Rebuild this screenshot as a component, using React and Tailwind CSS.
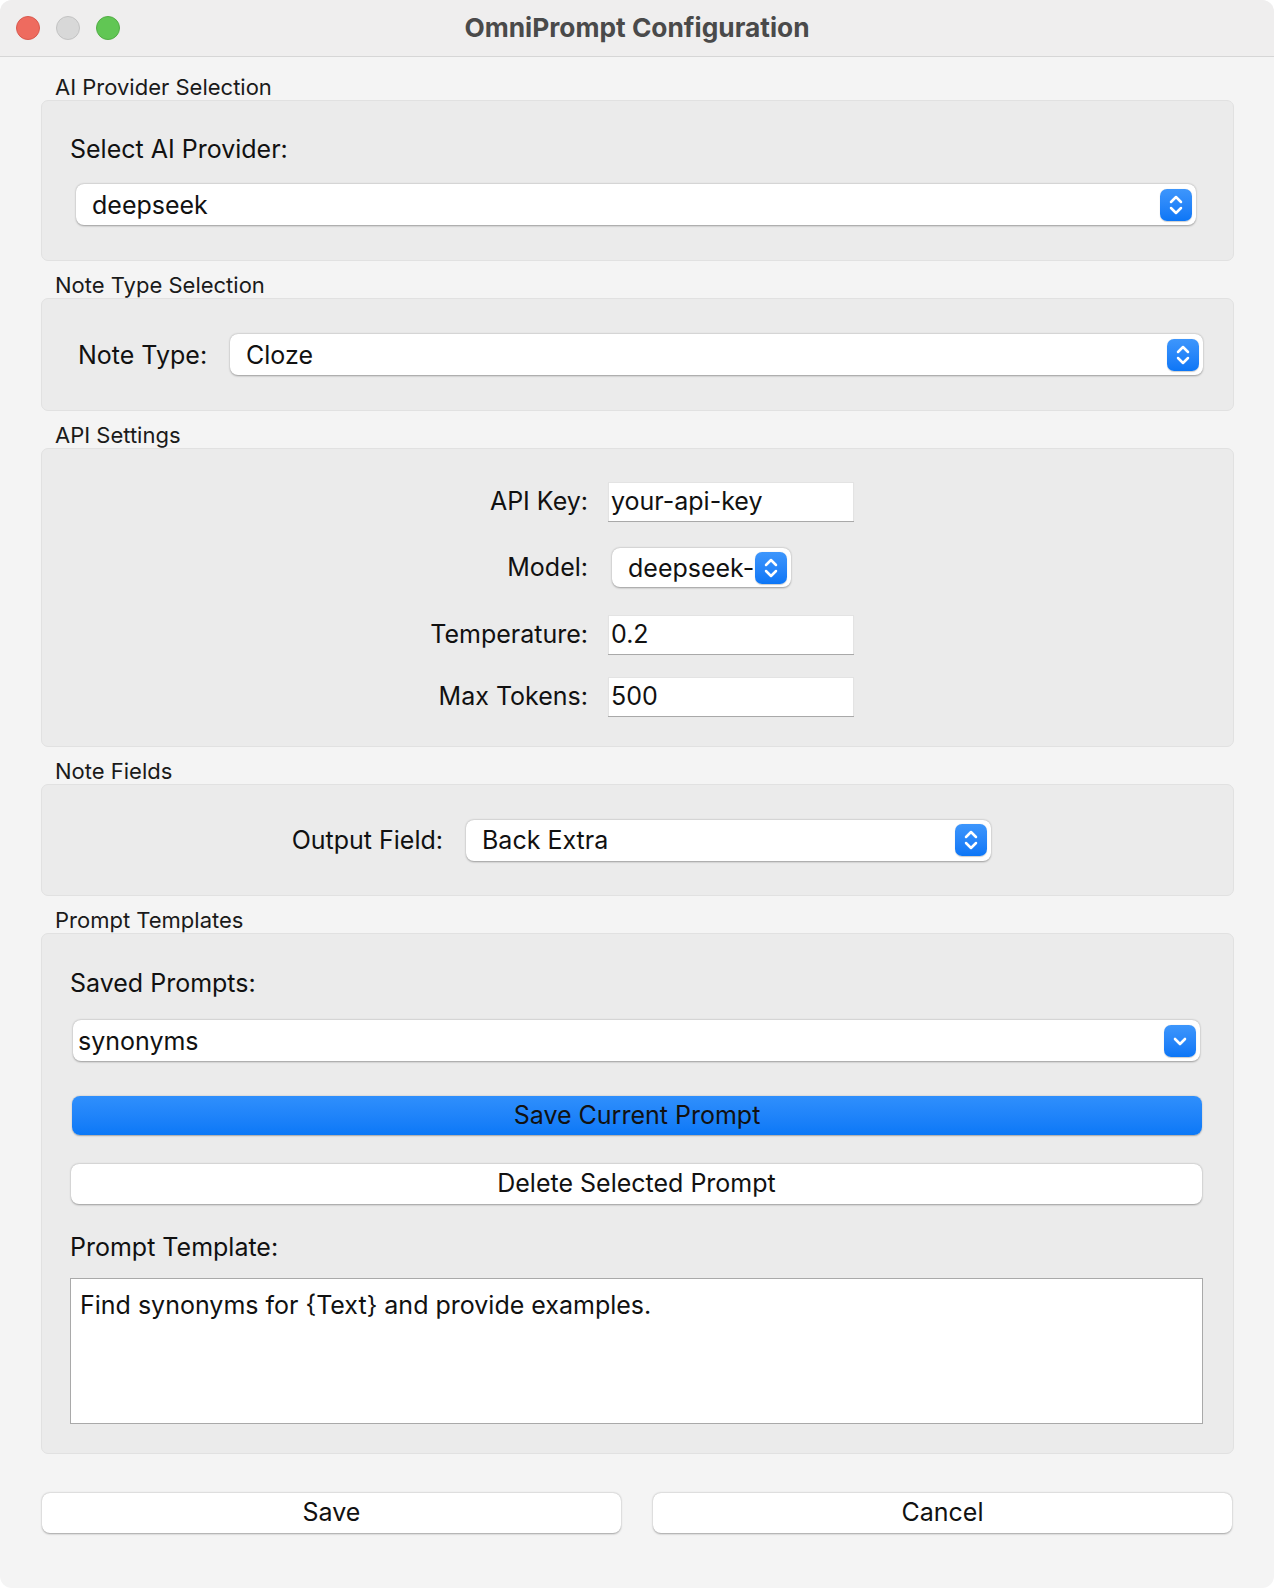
import React from "react";

const Stepper = ({ single }) => (
  <div className="w-[32px] h-[32px] rounded-[7px] bg-gradient-to-b from-[#3d96fc] to-[#0b76f6] flex items-center justify-center shrink-0 shadow-[0_0.5px_1px_rgba(0,0,0,0.2)]">
    {single ? (
      <svg width="18" height="18" viewBox="0 0 18 18" fill="none">
        <path d="M4 7l5 5 5-5" stroke="white" strokeWidth="2.6" strokeLinecap="round" strokeLinejoin="round" />
      </svg>
    ) : (
      <svg width="18" height="26" viewBox="0 0 18 26" fill="none">
        <path d="M4 10l5-5 5 5" stroke="white" strokeWidth="2.5" strokeLinecap="round" strokeLinejoin="round" />
        <path d="M4 16l5 5 5-5" stroke="white" strokeWidth="2.5" strokeLinecap="round" strokeLinejoin="round" />
      </svg>
    )}
  </div>
);

const Combo = ({ value, single, tight, className = "" }) => (
  <div className={`h-[41px] bg-white rounded-[8px] shadow-[0_0.5px_2px_rgba(0,0,0,0.35)] flex items-center pr-[4px] ${tight ? "pl-[5px]" : "pl-[16px]"} ${className}`}>
    <span className="flex-1 text-[25px] leading-[32px] whitespace-nowrap overflow-hidden">{value}</span>
    <Stepper single={single} />
  </div>
);

const Field = ({ value }) => (
  <div className="w-[246px] h-[39px] bg-white border-t border-x border-[#e3e3e3] shadow-[0_1px_0.5px_rgba(0,0,0,0.28)] flex items-center pl-[2px] text-[25px]">
    {value}
  </div>
);

const GroupLabel = ({ children }) => (
  <div className="pl-[14px] h-[26px] leading-[26px] text-[22px] text-[#1a1a1a]">{children}</div>
);

const Box = ({ className = "", children }) => (
  <div className={`box-border bg-[#ebebeb] border border-[#e1e1e1] rounded-[7px] ${className}`}>{children}</div>
);

const Button = ({ children, className = "" }) => (
  <div className={`h-[40px] bg-white rounded-[8px] shadow-[0_0.5px_2px_rgba(0,0,0,0.35)] flex items-center justify-center text-[25px] ${className}`}>
    {children}
  </div>
);

export default function App() {
  return (
    <div className="w-[1274px] h-[1588px] bg-white">
      <div className="w-[1274px] h-[1588px] bg-[#f4f4f4] rounded-[12px] overflow-hidden font-['Inter',sans-serif] text-[#111]">
        {/* title bar */}
        <div className="h-[57px] bg-[#efeeee] border-b border-[#d6d6d6] grid grid-cols-[1fr_auto_1fr] items-center">
          <div className="flex items-center gap-[16px] pl-[16px]">
            <div className="w-[24px] h-[24px] rounded-full bg-[#ee6b5f] border border-[#d9594e]" />
            <div className="w-[24px] h-[24px] rounded-full bg-[#d8d8d8] border border-[#c3c3c3]" />
            <div className="w-[24px] h-[24px] rounded-full bg-[#61c654] border border-[#52ad45]" />
          </div>
          <div className="text-[26.3px] font-bold text-[#4a4a4a]">OmniPrompt Configuration</div>
          <div />
        </div>

        <div className="pl-[41px] pr-[40px] pt-[17px]">
          <GroupLabel>AI Provider Selection</GroupLabel>
          <Box className="h-[161px]">
            <div className="mt-[33px] ml-[28px] text-[25px] leading-[30px]">Select AI Provider:</div>
            <Combo value="deepseek" className="mt-[20px] ml-[34px] mr-[37px]" />
          </Box>

          <div className="mt-[11px]">
            <GroupLabel>Note Type Selection</GroupLabel>
          </div>
          <Box className="h-[113px] flex items-center pl-[36px] pr-[30px]">
            <div className="w-[152px] text-[25px] pt-[3px]">Note Type:</div>
            <Combo value="Cloze" className="flex-1" />
          </Box>

          <div className="mt-[11px]">
            <GroupLabel>API Settings</GroupLabel>
          </div>
          <Box className="h-[299px] pt-[33px]">
            <div className="ml-[380px] flex flex-col">
              <div className="flex items-center gap-[20px]">
                <div className="w-[166px] text-right text-[25px]">API Key:</div>
                <Field value="your-api-key" />
              </div>
              <div className="flex items-center gap-[20px] mt-[27px]">
                <div className="w-[166px] text-right text-[25px]">Model:</div>
                <div className="ml-[4px] w-[179px] h-[39px] bg-white rounded-[8px] shadow-[0_0.5px_2px_rgba(0,0,0,0.35)] flex items-center pl-[16px] pr-[4px]">
                  <span className="flex-1 text-[25px] leading-[32px] overflow-hidden whitespace-nowrap">deepseek-</span>
                  <Stepper />
                </div>
              </div>
              <div className="flex items-center gap-[20px] mt-[28px]">
                <div className="w-[166px] text-right text-[25px]">Temperature:</div>
                <Field value="0.2" />
              </div>
              <div className="flex items-center gap-[20px] mt-[23px]">
                <div className="w-[166px] text-right text-[25px]">Max Tokens:</div>
                <Field value="500" />
              </div>
            </div>
          </Box>

          <div className="mt-[11px]">
            <GroupLabel>Note Fields</GroupLabel>
          </div>
          <Box className="h-[112px] flex items-center">
            <div className="ml-[236px] w-[165px] text-right text-[25px] pt-[2px]">Output Field:</div>
            <Combo value="Back Extra" className="ml-[23px] w-[525px]" />
          </Box>

          <div className="mt-[11px]">
            <GroupLabel>Prompt Templates</GroupLabel>
          </div>
          <Box className="h-[521px] pt-[34px]">
            <div className="ml-[28px] text-[25px] leading-[30px]">Saved Prompts:</div>
            <Combo value="synonyms" single tight className="mt-[22px] ml-[31px] mr-[33px]" />
            <div className="mt-[35px] ml-[30px] mr-[31px] h-[39px] rounded-[8px] bg-gradient-to-b from-[#2f8ffc] to-[#0a78f7] shadow-[0_0.5px_1.5px_rgba(0,0,0,0.3)] flex items-center justify-center text-[25px] text-[#111]">
              Save Current Prompt
            </div>
            <Button className="mt-[29px] ml-[29px] mr-[31px]">Delete Selected Prompt</Button>
            <div className="mt-[28px] ml-[28px] text-[25px] leading-[30px]">Prompt Template:</div>
            <div className="mt-[16px] ml-[28px] mr-[30px] h-[146px] bg-white border border-[#a9a9a9] px-[9px] pt-[8px] text-[25px]">
              Find synonyms for {"{Text}"} and provide examples.
            </div>
          </Box>

          <div className="mt-[39px] ml-[1px] mr-[2px] flex gap-[32px]">
            <Button className="flex-1">Save</Button>
            <Button className="flex-1">Cancel</Button>
          </div>
        </div>
      </div>
    </div>
  );
}
